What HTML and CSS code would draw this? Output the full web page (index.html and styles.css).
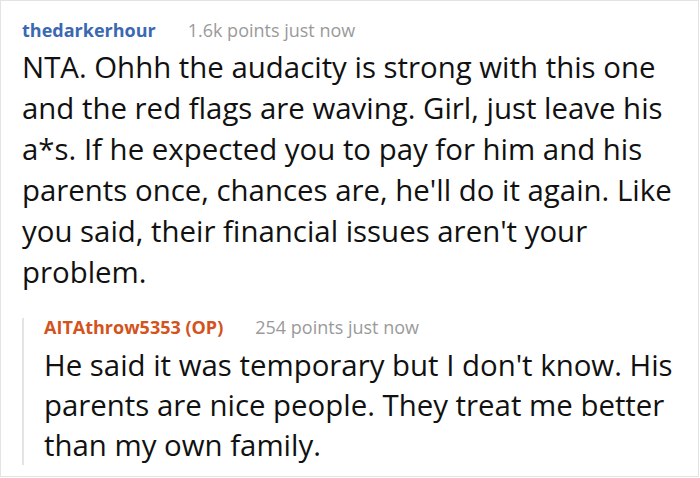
FILE: index.html
```html
<!DOCTYPE html>
<html>
<head>
<meta charset="utf-8">
<link rel="stylesheet" href="styles.css">
</head>
<body>
<div class="frame">
  <div class="comment">
    <div class="meta">
      <span class="user">thedarkerhour</span>
      <span class="points">1.6k points just now</span>
    </div>
    <p class="text">NTA. Ohhh the audacity is strong with this one and the red flags are waving. Girl, just leave his a*s. If he expected you to pay for him and his parents once, chances are, he'll do it again. Like you said, their financial issues aren't your problem.</p>
    <div class="reply">
      <div class="meta">
        <span class="user op">AITAthrow5353 (OP)</span>
        <span class="points">254 points just now</span>
      </div>
      <p class="text">He said it was temporary but I don't know. His parents are nice people. They treat me better than my own family.</p>
    </div>
  </div>
</div>
</body>
</html>
```
FILE: styles.css
```css
html, body {
  margin: 0;
  padding: 0;
  background: #ffffff;
}
.frame {
  box-sizing: border-box;
  width: 699px;
  height: 477px;
  border: 1px solid #e3e3e3;
  overflow: hidden;
  font-family: "Open Sans", "Noto Sans", sans-serif;
}
.comment {
  padding: 17px 3px 0 21px;
}
.meta {
  display: flex;
  gap: 32px;
  font-size: 18px;
  line-height: 24px;
}
.user {
  font-weight: bold;
  color: #3a69b2;
}
.user.op {
  color: #d4521c;
}
.points {
  color: #9a9a9a;
}
.text {
  margin: 5px 0 0 0;
  font-size: 29.4px;
  line-height: 41px;
  color: #111111;
}
.reply {
  margin-top: 25px;
  border-left: 2px solid #e4e4e4;
  padding-left: 20px;
  padding-bottom: 0;
}
.reply .meta {
  line-height: 18px;
}
.reply .text {
  margin-top: 9px;
  line-height: 40px;
}
```
